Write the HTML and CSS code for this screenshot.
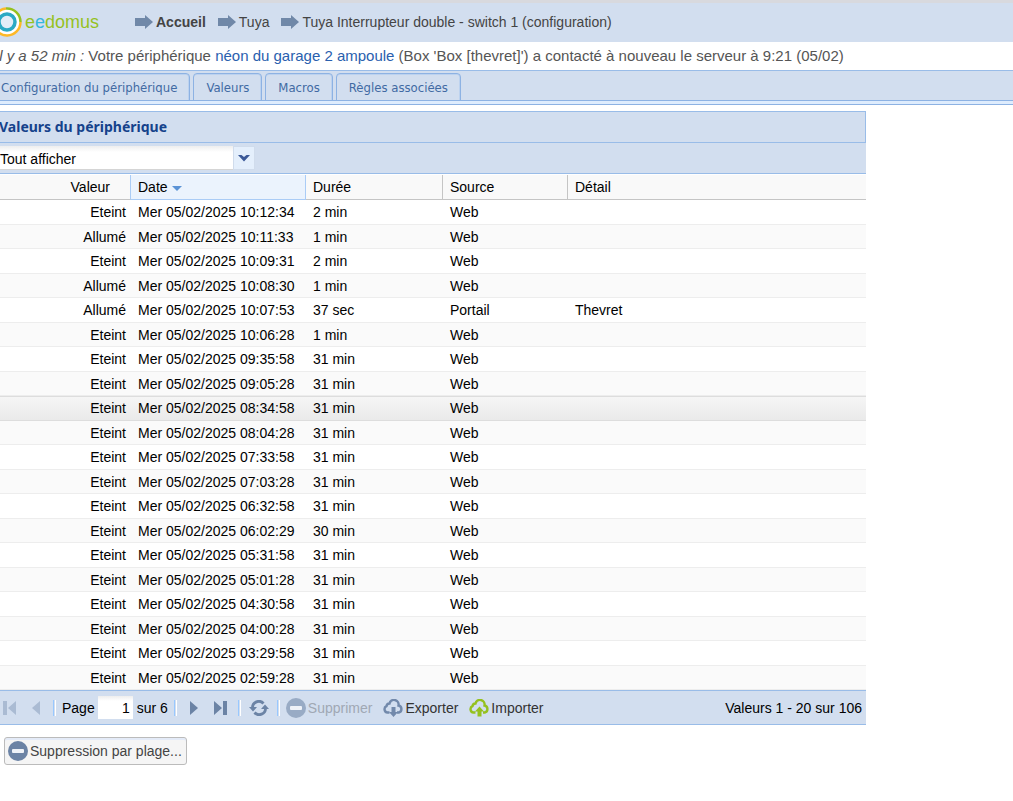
FILE: index.html
```html
<!DOCTYPE html>
<html lang="fr">
<head>
    <meta charset="UTF-8">
    <meta name="viewport" content="width=device-width, initial-scale=1.0">
    <title>eedomus - Valeurs du périphérique</title>
    <link rel="stylesheet" href="styles.css">
</head>
<body>
    <!-- shared icons -->
    <svg class="defs" width="0" height="0">
        <symbol id="arrow" viewBox="0 0 18 14"><path d="M0 3h10V0l8 7-8 7v-3H0z"/></symbol>
        <symbol id="minus" viewBox="0 0 20 20"><circle cx="10" cy="10" r="10"/><rect x="4" y="8" width="12" height="4" rx="1" fill="#eef2f8"/></symbol>
        <symbol id="cloud" viewBox="0 0 20 18"><path d="M6.500 13.500H4.500A3.300 3.300 0 0 1 3.500 7.200A3 3 0 0 1 6.500 4.500A4.600 4.600 0 0 1 15.500 6.500A3.600 3.600 0 0 1 15.800 13.500H14" fill="none" stroke="currentColor" stroke-width="2.400"/></symbol>
    </svg>
    <div class="page">
        <header class="header">
            <a class="logo" href="#" aria-label="eedomus">
                <svg width="30" height="30" viewBox="0 0 30 30">
                    <circle cx="15" cy="15" r="13" fill="#fff"/>
                    <path d="M14 1.500A13.500 13.500 0 0 1 28.500 15" fill="none" stroke="#95c11f" stroke-width="2.500"/>
                    <path d="M28.500 15A13.500 13.500 0 1 1 14 1.500" fill="none" stroke="#fdb827" stroke-width="2.500"/>
                    <circle cx="15" cy="15" r="8" fill="#e4edf8" stroke="#2ba9c4" stroke-width="3.500"/>
                </svg>
                <span>e<i>e</i>domus</span>
            </a>
            <nav class="crumbs">
                <a href="#"><svg width="18" height="14"><use href="#arrow"/></svg><b>Accueil</b></a>
                <a href="#"><svg width="18" height="14"><use href="#arrow"/></svg>Tuya</a>
                <a href="#"><svg width="18" height="14"><use href="#arrow"/></svg>Tuya Interrupteur double - switch 1 (configuration)</a>
            </nav>
        </header>
        <p class="notice"><em>Il y a 52 min :</em> Votre périphérique <a href="#">néon du garage 2 ampoule</a> (Box 'Box [thevret]') a contacté à nouveau le serveur à 9:21 (05/02)</p>
        <nav class="tabs">
            <button>Configuration du périphérique</button>
            <button>Valeurs</button>
            <button>Macros</button>
            <button>Règles associées</button>
        </nav>
        <main class="panel">
            <h1>Valeurs du périphérique</h1>
            <div class="filter">
                <div class="combo">
                    <select aria-label="Filtre">
                        <option>Tout afficher</option>
                    </select>
                    <span class="trigger"><svg width="12" height="8" viewBox="0 0 12 8"><path d="M0 1h3.500L6 3l2.500-2H12L6 7.500z" fill="#3b5998"/></svg></span>
                </div>
            </div>
            <table>
                <colgroup><col class="c1"><col class="c2"><col class="c3"><col class="c4"><col></colgroup>
                <thead>
                    <tr><th>Valeur</th><th class="sorted">Date<svg width="10" height="5" viewBox="0 0 10 5"><path d="M0 0h10L5 5z" fill="#5b93d6"/></svg></th><th>Durée</th><th>Source</th><th>Détail</th></tr>
                </thead>
                <tbody>
                    <tr><td>Eteint</td><td>Mer 05/02/2025 10:12:34</td><td>2 min</td><td>Web</td><td></td></tr>
                    <tr><td>Allumé</td><td>Mer 05/02/2025 10:11:33</td><td>1 min</td><td>Web</td><td></td></tr>
                    <tr><td>Eteint</td><td>Mer 05/02/2025 10:09:31</td><td>2 min</td><td>Web</td><td></td></tr>
                    <tr><td>Allumé</td><td>Mer 05/02/2025 10:08:30</td><td>1 min</td><td>Web</td><td></td></tr>
                    <tr><td>Allumé</td><td>Mer 05/02/2025 10:07:53</td><td>37 sec</td><td>Portail</td><td>Thevret</td></tr>
                    <tr><td>Eteint</td><td>Mer 05/02/2025 10:06:28</td><td>1 min</td><td>Web</td><td></td></tr>
                    <tr><td>Eteint</td><td>Mer 05/02/2025 09:35:58</td><td>31 min</td><td>Web</td><td></td></tr>
                    <tr><td>Eteint</td><td>Mer 05/02/2025 09:05:28</td><td>31 min</td><td>Web</td><td></td></tr>
                    <tr class="over"><td>Eteint</td><td>Mer 05/02/2025 08:34:58</td><td>31 min</td><td>Web</td><td></td></tr>
                    <tr><td>Eteint</td><td>Mer 05/02/2025 08:04:28</td><td>31 min</td><td>Web</td><td></td></tr>
                    <tr><td>Eteint</td><td>Mer 05/02/2025 07:33:58</td><td>31 min</td><td>Web</td><td></td></tr>
                    <tr><td>Eteint</td><td>Mer 05/02/2025 07:03:28</td><td>31 min</td><td>Web</td><td></td></tr>
                    <tr><td>Eteint</td><td>Mer 05/02/2025 06:32:58</td><td>31 min</td><td>Web</td><td></td></tr>
                    <tr><td>Eteint</td><td>Mer 05/02/2025 06:02:29</td><td>30 min</td><td>Web</td><td></td></tr>
                    <tr><td>Eteint</td><td>Mer 05/02/2025 05:31:58</td><td>31 min</td><td>Web</td><td></td></tr>
                    <tr><td>Eteint</td><td>Mer 05/02/2025 05:01:28</td><td>31 min</td><td>Web</td><td></td></tr>
                    <tr><td>Eteint</td><td>Mer 05/02/2025 04:30:58</td><td>31 min</td><td>Web</td><td></td></tr>
                    <tr><td>Eteint</td><td>Mer 05/02/2025 04:00:28</td><td>31 min</td><td>Web</td><td></td></tr>
                    <tr><td>Eteint</td><td>Mer 05/02/2025 03:29:58</td><td>31 min</td><td>Web</td><td></td></tr>
                    <tr><td>Eteint</td><td>Mer 05/02/2025 02:59:28</td><td>31 min</td><td>Web</td><td></td></tr>
                </tbody>
            </table>
            <div class="pager">
                <button class="nav" disabled aria-label="Première page"><svg width="14" height="14" viewBox="0 0 14 14"><path d="M1 0h4v14H1zM14 0v14L6 7z"/></svg></button>
                <button class="nav" disabled aria-label="Page précédente"><svg width="14" height="14" viewBox="0 0 14 14"><path d="M11 0v14L3 7z"/></svg></button>
                <span class="sep"></span>
                <label for="pagenum">Page</label>
                <input type="text" id="pagenum" value="1">
                <span>sur 6</span>
                <span class="sep"></span>
                <button class="nav" aria-label="Page suivante"><svg width="14" height="14" viewBox="0 0 14 14"><path d="M3 0v14l8-7z"/></svg></button>
                <button class="nav" aria-label="Dernière page"><svg width="14" height="14" viewBox="0 0 14 14"><path d="M9 0h4v14H9zM0 0v14l8-7z"/></svg></button>
                <span class="sep"></span>
                <button class="refresh" aria-label="Rafraîchir"><svg width="20" height="16" viewBox="0 0 20 16"><path d="M3.500 8A6.300 6.300 0 0 1 14.500 3.500M16.500 8A6.300 6.300 0 0 1 5.500 12.500" fill="none" stroke="currentColor" stroke-width="2.800"/><path d="M0 7h8L4 11.500zM12 9h8L16 4.500z"/></svg></button>
                <span class="sep"></span>
                <button class="action" disabled><svg width="20" height="20"><use href="#minus"/></svg>Supprimer</button>
                <button class="action"><svg width="20" height="18" viewBox="0 0 20 18"><use href="#cloud"/><path d="M8.500 8h4v5H15l-4.500 5L6 13h2.500z"/></svg>Exporter</button>
                <button class="action import"><svg width="20" height="18" viewBox="0 0 20 18"><use href="#cloud"/><path d="M8.500 17.500h4v-5H15l-4.500-5-4.500 5h2.500z"/></svg>Importer</button>
                <span class="total">Valeurs 1 - 20 sur 106</span>
            </div>
        </main>
        <button class="range"><svg width="20" height="20"><use href="#minus"/></svg>Suppression par plage...</button>
    </div>
</body>
</html>
```

FILE: styles.css
```css
* {
    box-sizing: border-box;
}
body {
    margin: 0;
    overflow-x: hidden;
    background-color: #fff;
    font-family: "Liberation Sans", Arial, sans-serif;
    font-size: 14px;
    color: #000;
}
button, input, select {
    margin: 0;
    padding: 0;
    border: 0;
    background: none;
    font: inherit;
    color: inherit;
}
a {
    color: inherit;
    text-decoration: none;
}
svg {
    flex: none;
    fill: currentColor;
}
.defs {
    position: absolute;
}
/* the page is scrolled a little to the right */
.page {
    margin-left: -12px;
}
.header {
    display: flex;
    align-items: center;
    height: 42px;
    padding: 0 0 2px 4px;
    border-top: 3px solid #d8d9de;
    background-color: #d2deef;
}
.logo {
    display: flex;
    align-items: center;
    gap: 3px;
    width: 143px;
    font-size: 18px;
    line-height: 30px;
    color: #95c11f;
}
.logo i {
    font-style: normal;
    color: #35b6dc;
}
.crumbs {
    display: flex;
    gap: 12px;
    color: #444;
}
.crumbs a {
    display: flex;
    align-items: center;
    gap: 3px;
}
.crumbs svg {
    color: #7088a8;
}
.notice {
    margin: 0;
    padding-left: 7px;
    font-size: 15px;
    line-height: 28px;
    white-space: nowrap;
    color: #555;
}
.notice a {
    color: #2a60ae;
}
.tabs {
    display: flex;
    gap: 3px;
    height: 35px;
    padding-top: 2px;
    border-top: 1px solid #99bce8;
    border-bottom: 1px solid #8db2e3;
    background: linear-gradient(#8db2e3 1px, #deecfd 1px) bottom / 100% 4px no-repeat, #d2deef;
}
.tabs button {
    height: 28px;
    padding: 0 12px;
    border: 1px solid #8db2e3;
    border-radius: 4px 4px 0 0;
    box-shadow: inset 0 1px #bcd2ef, inset -1px 0 #bcd2ef;
    font-family: "DejaVu Sans Condensed", Tahoma, sans-serif;
    font-size: 13px;
    color: #416aa3;
}
.panel {
    max-width: 878px;
    margin-top: 6px;
}
.panel h1 {
    height: 32px;
    margin: 0;
    padding-left: 10px;
    border: 1px solid #99bce8;
    background-color: #d2deef;
    font-family: "Noto Sans", Tahoma, sans-serif;
    font-size: 14px;
    line-height: 30px;
    color: #15428b;
}
.filter {
    height: 31px;
    padding-top: 3px;
    border-bottom: 1px solid #99bce8;
    background-color: #d2deef;
}
.combo {
    display: flex;
    width: 267px;
    height: 24px;
}
.combo select {
    flex: 1;
    appearance: none;
    padding: 2px 0 0 12px;
    border-bottom: 1px solid #d5d5d5;
    background: linear-gradient(#eee, #fff 6px);
}
.trigger {
    display: flex;
    align-items: center;
    justify-content: center;
    width: 22px;
    border: 1px solid #d0dcec;
    background-color: #e4effc;
}
table {
    width: 100%;
    border-collapse: separate;
    border-spacing: 0;
    table-layout: fixed;
    border-top: 1px solid #fff;
}
.c1 {
    width: 143px;
}
.c2 {
    width: 175px;
}
.c3 {
    width: 137px;
}
.c4 {
    width: 125px;
}
th {
    height: 25px;
    padding: 0 7px;
    border-right: 1px solid #c5c5c5;
    border-bottom: 1px solid #c5c5c5;
    background-color: #f9f9f9;
    font-weight: normal;
    text-align: left;
}
th:first-child {
    padding-right: 20px;
    border-right-color: #aaccf6;
    text-align: right;
}
th:last-child {
    border-right: 0;
}
th.sorted {
    border-color: #aaccf6;
    background-color: #ebf3fd;
}
th.sorted svg {
    margin-left: 4px;
    vertical-align: 1px;
}
td {
    height: 25px;
    padding: 0 7px;
    border-bottom: 1px solid #ededed;
    line-height: 16px;
}
tr:nth-child(even) td {
    height: 24px;
    background-color: #fafafa;
}
td:first-child {
    padding-right: 5px;
    text-align: right;
}
tr.over td {
    border-color: #ddd;
    background: linear-gradient(#ddd 1px, #f5f5f5 1px, #eaeaea);
}
.pager {
    display: flex;
    align-items: center;
    height: 35px;
    padding: 0 4px 0 10px;
    border-top: 1px solid #99bce8;
    border-bottom: 1px solid #99bce8;
    background-color: #d2deef;
}
.nav {
    display: flex;
    justify-content: center;
    width: 22px;
    color: #6b83a5;
}
.nav + .nav {
    margin-left: 5px;
}
.nav:disabled {
    color: #aabbd3;
}
.sep {
    width: 3px;
    height: 16px;
    margin: 0 6px;
    border-left: 1px solid #98c8ff;
    border-right: 1px solid #fff;
}
.pager input {
    width: 35px;
    height: 23px;
    margin: 0 4px 0 3px;
    padding: 0 3px;
    background: linear-gradient(#eee, #fff 5px);
    text-align: right;
}
.refresh {
    display: flex;
    margin: 0 2px;
    color: #6b83a5;
}
.action {
    display: flex;
    align-items: center;
    gap: 2px;
    margin-right: 11px;
    color: #333;
}
.action svg {
    color: #7289ab;
}
.action:disabled {
    color: #a0a8b4;
}
.action:disabled svg {
    color: #98abc5;
}
.action.import svg {
    color: #95c11f;
}
.total {
    margin-left: auto;
}
.range {
    display: flex;
    align-items: center;
    gap: 2px;
    height: 28px;
    margin: 12px 0 0 16px;
    padding: 0 4px 0 3px;
    border: 1px solid #bbb;
    border-radius: 3px;
    background-color: #f5f5f5;
    box-shadow: inset 0 2px #e4ebf8;
    color: #444;
}
.range svg {
    color: #6b83a5;
}
```
